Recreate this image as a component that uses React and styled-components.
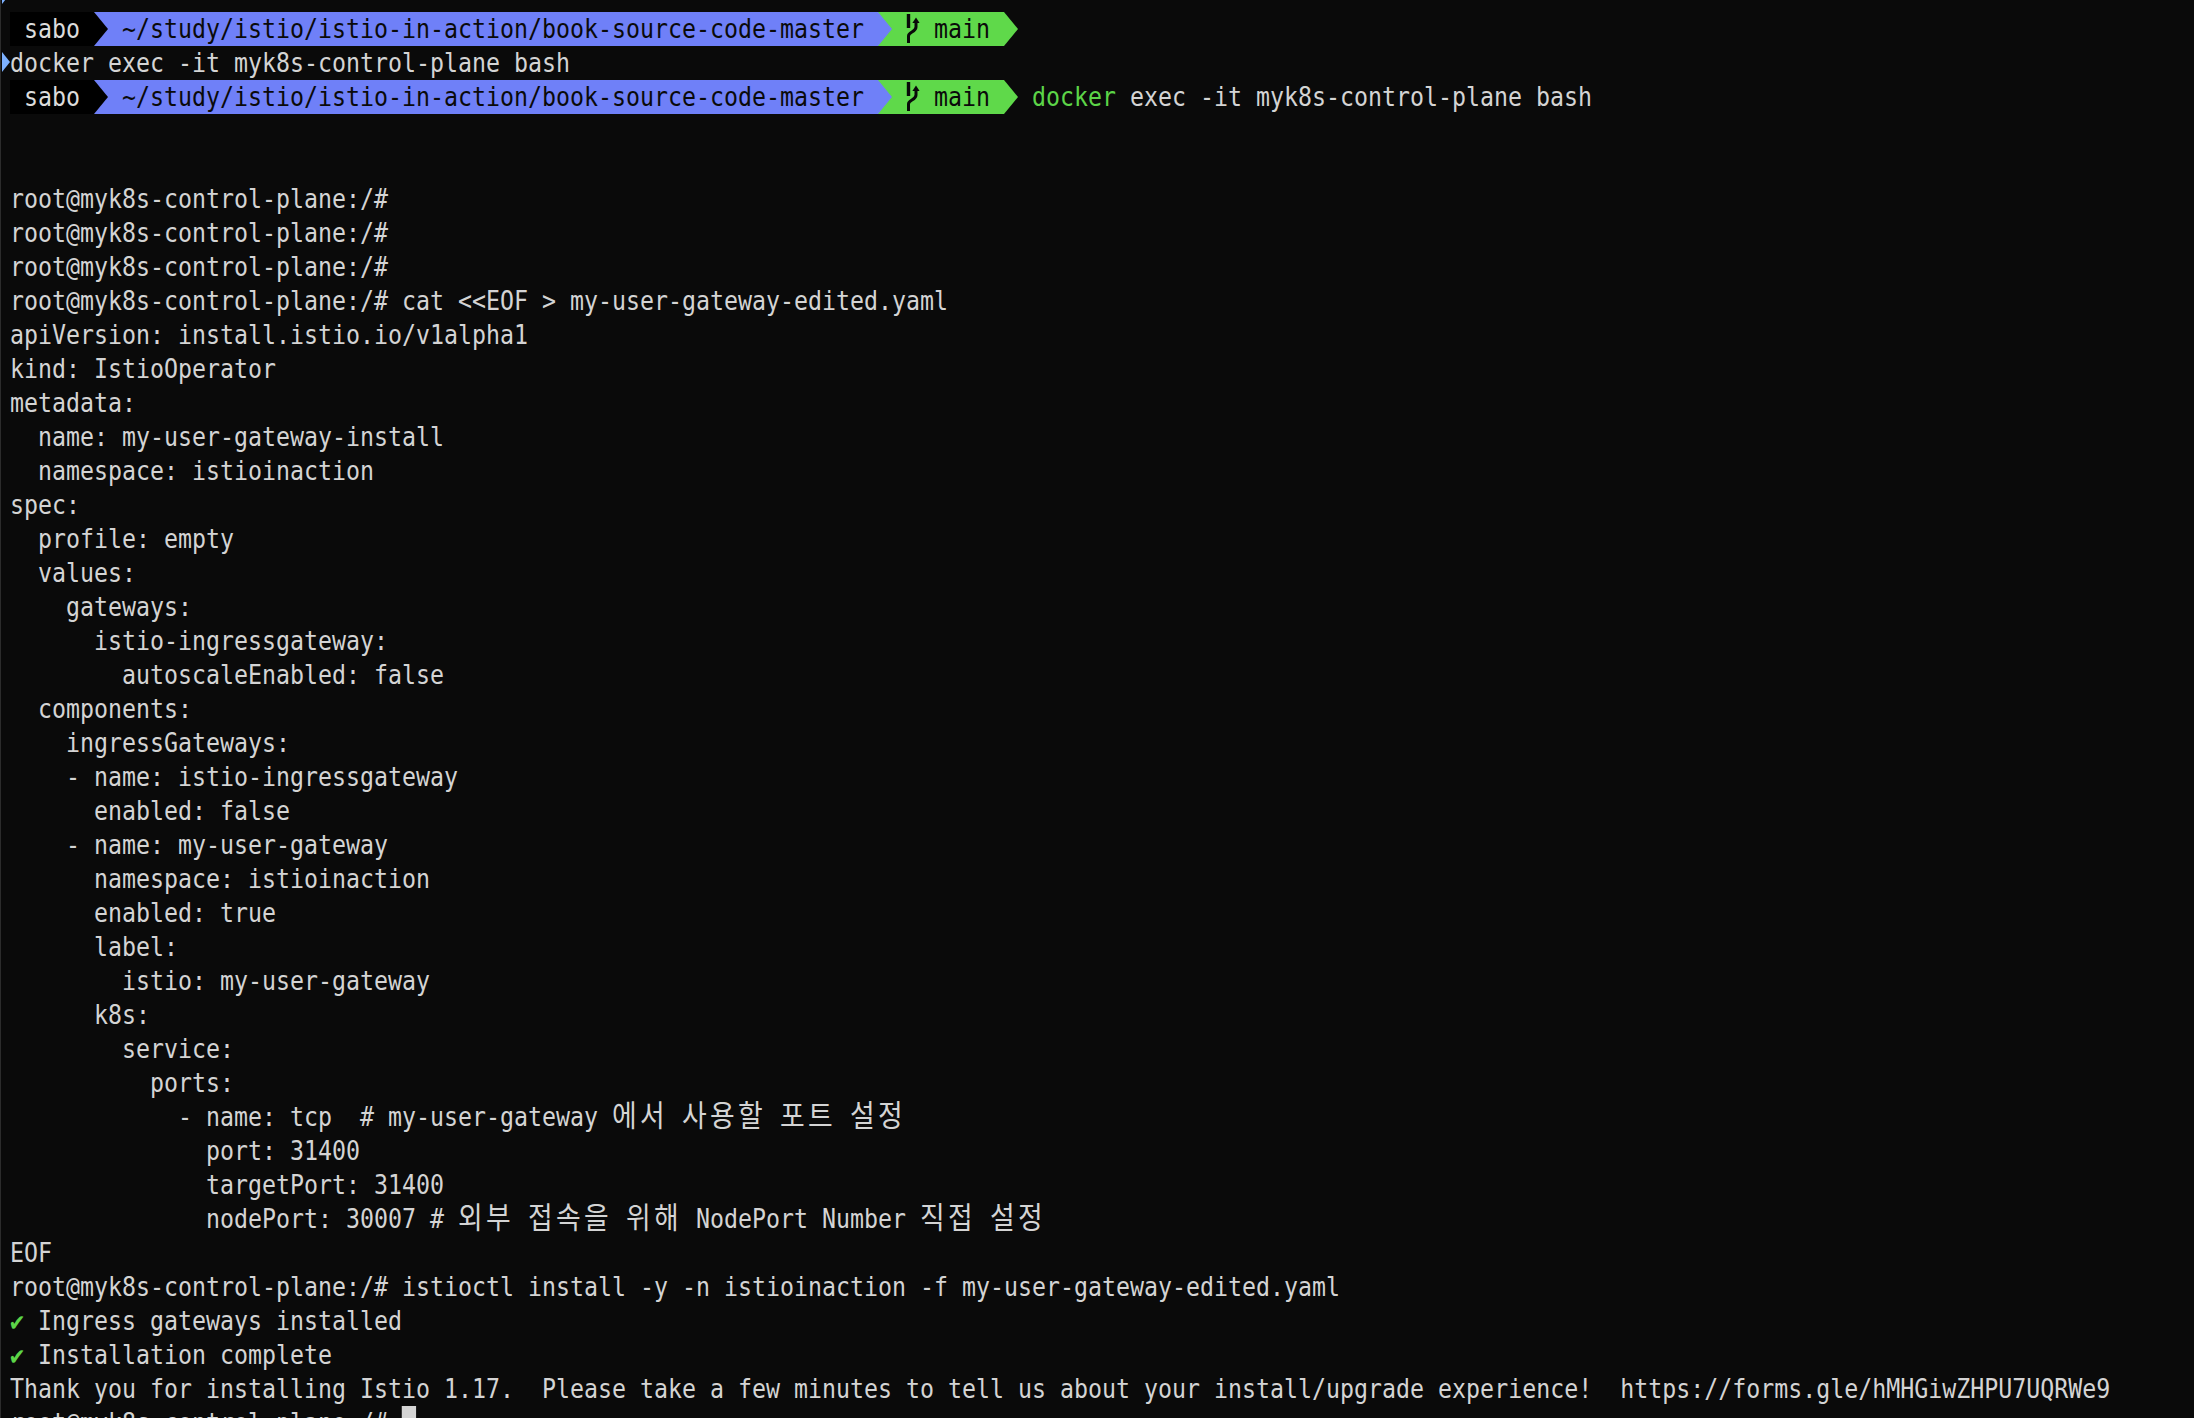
import React from "react";
import styled, { createGlobalStyle } from "styled-components";

const CELL = 14;
const FONT_SIZE = 26;
const SQUEEZE = CELL / (FONT_SIZE * 0.602);
const KO_SIZE = 30;

const Global = createGlobalStyle`
  html, body { margin: 0; padding: 0; background: #0a0a0a; height: 100%; overflow: hidden; }
  #root { height: 100%; }
`;

const Terminal = styled.main`
  position: relative;
  box-sizing: border-box;
  height: 1418px;
  overflow: hidden;
  padding: 12px 0 0 9px;
  background: #0a0a0a;
  border-left: 1px solid #2c2c2c;
  color: #d4d4d4;
  font-family: "DejaVu Sans Mono", "Noto Sans CJK KR", monospace;
  font-size: ${FONT_SIZE}px;
`;

const Mark = styled.i`
  position: absolute;
  left: 1px;
  top: ${(p) => p.$top}px;
  width: 8px;
  height: 20px;
  background: #7db1ff;
  clip-path: polygon(0 0, 100% 50%, 0 100%);
`;

const Row = styled.div`
  display: flex;
  height: 34px;
  line-height: 34px;
  white-space: pre;
`;

const Line = styled.div`
  height: 34px;
  line-height: 34px;
  white-space: pre;
  transform: scaleX(${SQUEEZE});
  transform-origin: left center;
`;

const Segment = styled.div`
  position: relative;
  display: flex;
  align-items: center;
  height: 34px;
  padding: 0 ${(p) => p.$right}px 0 ${(p) => p.$left}px;
  background: ${(p) => p.$bg};
  color: ${(p) => p.$fg};
  &::after {
    content: "";
    position: absolute;
    z-index: 1;
    top: 0;
    left: 100%;
    width: 14px;
    height: 34px;
    background: ${(p) => p.$bg};
    clip-path: polygon(0 0, 100% 50%, 0 100%);
  }
`;

const Label = styled.span`
  display: block;
  flex: none;
  width: ${(p) => p.$cells * CELL}px;
  color: ${(p) => p.$color || "inherit"};
  transform: scaleX(${SQUEEZE});
  transform-origin: left center;
`;

const BranchIcon = styled.svg`
  flex: none;
  width: 14px;
  height: 34px;
  margin-right: 14px;
`;

const Command = styled.div`
  display: flex;
  margin-left: 28px;
`;

const Ko = styled.span`
  font-family: "Noto Sans CJK KR", sans-serif;
  font-size: ${KO_SIZE}px;
  line-height: 0;
  letter-spacing: ${2 * FONT_SIZE * 0.602 - KO_SIZE * 0.92}px;
`;

const Check = styled.span`
  color: #5cd548;
`;

const Cursor = styled.span`
  display: inline-block;
  width: 15.65px;
  height: 34px;
  vertical-align: top;
  background: #d4d4d4;
`;

const Branch = () => (
  <BranchIcon viewBox="0 0 14 34" aria-hidden="true">
    <path d="M2.5 2V16" stroke="#0a0a0a" strokeWidth="3.4" fill="none" />
    <path
      d="M2.5 31V24C2.5 20 10 20 10 15V9"
      stroke="#0a0a0a"
      strokeWidth="3"
      fill="none"
    />
    <path d="M10 5.5L13.6 11H6.4Z" fill="#0a0a0a" />
  </BranchIcon>
);

const Prompt = ({ children }) => (
  <Row>
    <Segment $bg="#000" $fg="#dcdcdc" $left={14} $right={14}>
      <Label $cells={4}>sabo</Label>
    </Segment>
    <Segment $bg="#6f80f8" $fg="#0a0a0a" $left={28} $right={14}>
      <Label $cells={53}>~/study/istio/istio-in-action/book-source-code-master</Label>
    </Segment>
    <Segment $bg="#5fd94a" $fg="#0a0a0a" $left={28} $right={14}>
      <Branch />
      <Label $cells={4}>main</Label>
    </Segment>
    {children}
  </Row>
);

const TextLine = ({ text }) => (
  <Line>
    {text.split(/([\uAC00-\uD7A3]+)/).map((part, i) =>
      i % 2 ? <Ko key={i}>{part}</Ko> : part
    )}
  </Line>
);

const ROOT = "root@myk8s-control-plane:/#";

const BODY = [
  "",
  "",
  ROOT,
  ROOT,
  ROOT,
  `${ROOT} cat <<EOF > my-user-gateway-edited.yaml`,
  "apiVersion: install.istio.io/v1alpha1",
  "kind: IstioOperator",
  "metadata:",
  "  name: my-user-gateway-install",
  "  namespace: istioinaction",
  "spec:",
  "  profile: empty",
  "  values:",
  "    gateways:",
  "      istio-ingressgateway:",
  "        autoscaleEnabled: false",
  "  components:",
  "    ingressGateways:",
  "    - name: istio-ingressgateway",
  "      enabled: false",
  "    - name: my-user-gateway",
  "      namespace: istioinaction",
  "      enabled: true",
  "      label:",
  "        istio: my-user-gateway",
  "      k8s:",
  "        service:",
  "          ports:",
  "            - name: tcp  # my-user-gateway 에서 사용할 포트 설정",
  "              port: 31400",
  "              targetPort: 31400",
  "              nodePort: 30007 # 외부 접속을 위해 NodePort Number 직접 설정",
  "EOF",
  `${ROOT} istioctl install -y -n istioinaction -f my-user-gateway-edited.yaml`,
];

export default function App() {
  return (
    <>
      <Global />
      <Terminal>
        <Mark $top={-16} />
        <Mark $top={52} />
        <Prompt />
        <Line>docker exec -it myk8s-control-plane bash</Line>
        <Prompt>
          <Command>
            <Label $cells={6} $color="#5cd548">docker</Label>
            <Label $cells={1} />
            <Label $cells={33}>exec -it myk8s-control-plane bash</Label>
          </Command>
        </Prompt>
        {BODY.map((text, i) => (
          <TextLine key={i} text={text} />
        ))}
        <Line><Check>✔</Check> Ingress gateways installed</Line>
        <Line><Check>✔</Check> Installation complete</Line>
        <Line>Thank you for installing Istio 1.17.  Please take a few minutes to tell us about your install/upgrade experience!  https://forms.gle/hMHGiwZHPU7UQRWe9</Line>
        <Line>{ROOT} <Cursor /></Line>
      </Terminal>
    </>
  );
}
